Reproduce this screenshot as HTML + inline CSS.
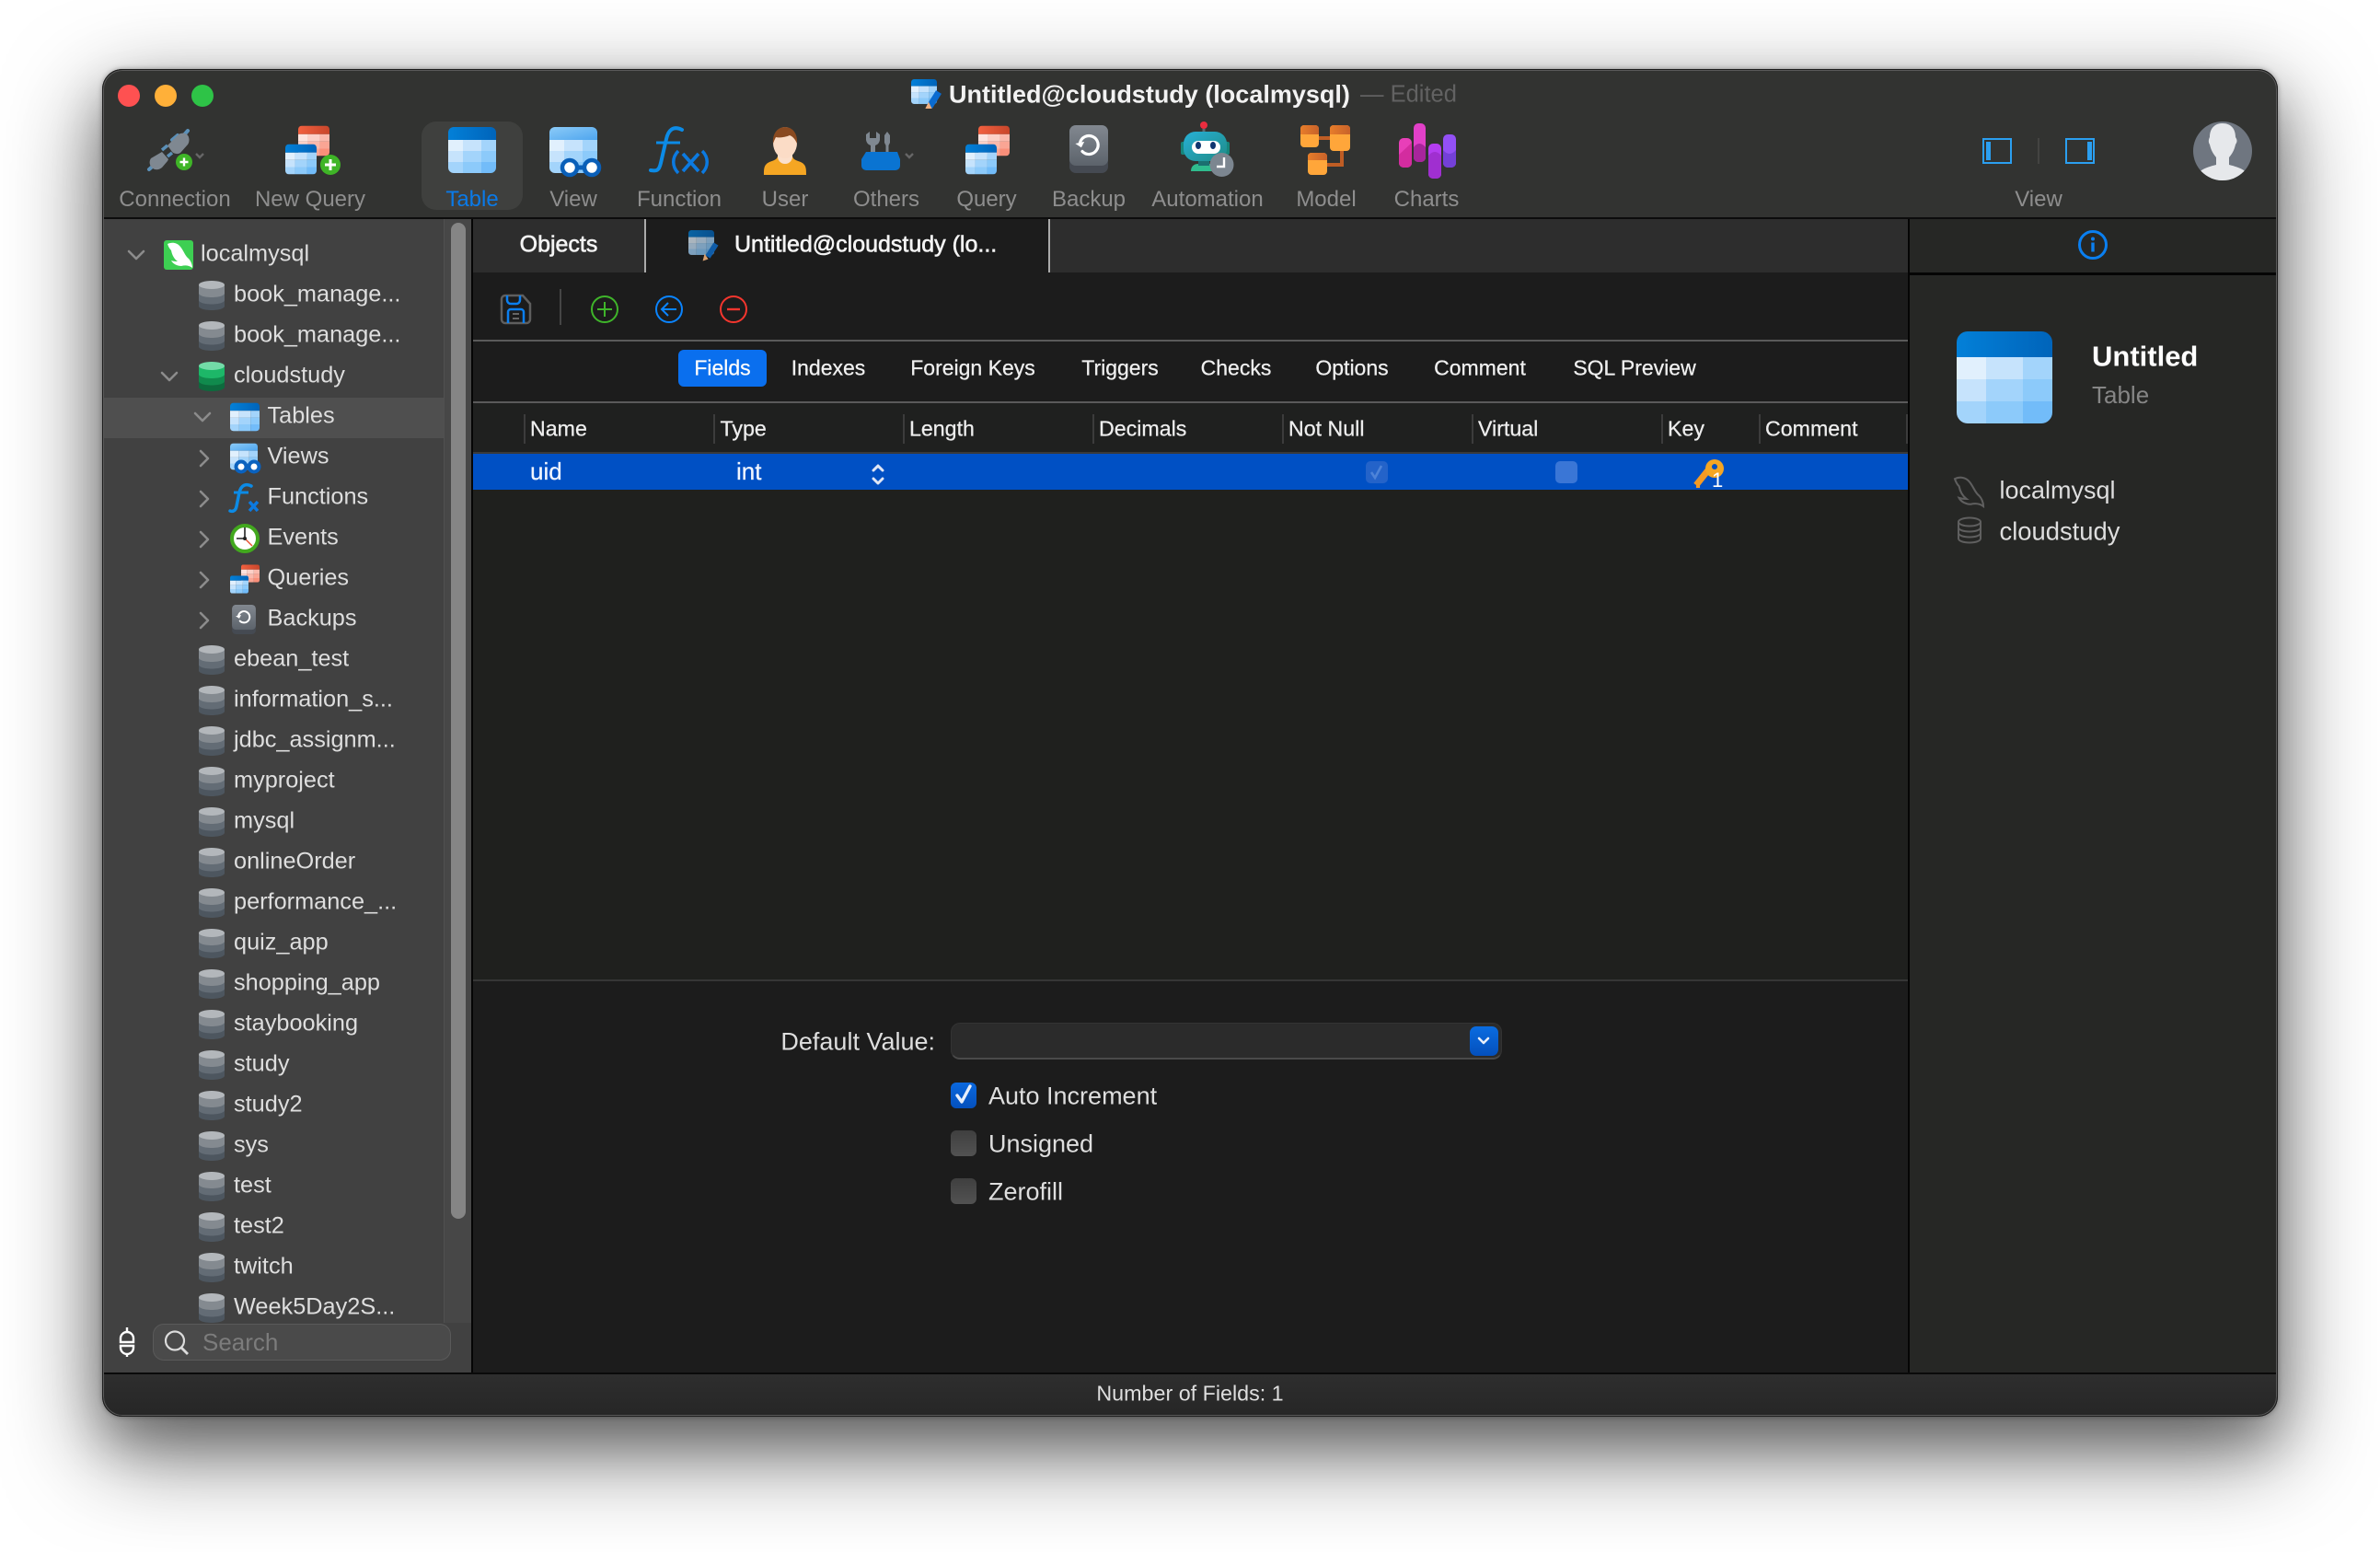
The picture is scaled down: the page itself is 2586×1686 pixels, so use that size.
<!DOCTYPE html>
<html><head><meta charset="utf-8"><title>Untitled@cloudstudy (localmysql)</title>
<style>
html,body{margin:0;padding:0;background:#fff;width:2586px;height:1686px;overflow:hidden}
body{font-family:"Liberation Sans",sans-serif;position:relative}
div{position:absolute}
.t{position:absolute;white-space:nowrap;line-height:1;transform:translateY(-50%)}
.c{transform:translate(-50%,-50%)}
.s{font-size:25.3px;color:#dedede}
.f{font-size:27px;color:#dedede}
.l{font-size:24px;color:#8e8e8e}
.h{font-size:23.2px;color:#eee;-webkit-text-stroke:.25px #eee}
.n{font-size:23px;color:#f0f0f0;-webkit-text-stroke:.25px #f0f0f0}
#shadow{left:111px;top:75px;width:2364px;height:1464px;border-radius:22px;box-shadow:0 36px 100px 4px rgba(0,0,0,.56),0 28px 50px rgba(0,0,0,.22),0 0 6px rgba(0,0,0,.35)}
#w{left:111px;top:75px;width:2364px;height:1464px;border-radius:22px;overflow:hidden;background:#2a2a2a}
#p{left:-111px;top:-75px;width:2586px;height:1686px}
#frame{left:111px;top:75px;width:2364px;height:1464px;border-radius:22px;box-sizing:border-box;border:1px solid #1d1d1d;box-shadow:inset 0 0 0 1px #5a5a5a}
</style></head><body>
<div id="shadow"></div>
<div id="w"><div id="p">
<div style="left:111px;top:75px;width:2364px;height:161px;background:#323331"></div>
<div style="left:111px;top:236px;width:2364px;height:2px;background:#0c0c0c"></div>
<div style="left:111px;top:238px;width:401px;height:1253px;background:#414141"></div>
<div style="left:111px;top:432px;width:371px;height:44px;background:#4f4f4f"></div>
<div style="left:482px;top:238px;width:30px;height:1199px;background:#474747;box-shadow:inset 1px 0 0 #505050"></div>
<div style="left:490px;top:242px;width:16px;height:1082px;border-radius:8px;background:#858585"></div>
<div style="left:512px;top:238px;width:2px;height:1253px;background:#050505"></div>
<div style="left:514px;top:238px;width:1559px;height:1253px;background:#1c1c1c"></div>
<div style="left:514px;top:238px;width:1559px;height:58px;background:#2d2d2d"></div>
<div style="left:701px;top:238px;width:439px;height:58px;background:#1c1c1c"></div>
<div style="left:700px;top:238px;width:2px;height:58px;background:#aaa"></div>
<div style="left:1139px;top:238px;width:2px;height:58px;background:#aaa"></div>
<div style="left:514px;top:369px;width:1559px;height:2px;background:#5a5a5a"></div>
<div style="left:514px;top:436px;width:1559px;height:2px;background:#5a5a5a"></div>
<div style="left:514px;top:438px;width:1559px;height:53px;background:#1f201f"></div>
<div style="left:514px;top:491px;width:1559px;height:2px;background:#3a3a3a"></div>
<div style="left:514px;top:493px;width:1559px;height:39px;background:#0050c4"></div>
<div style="left:514px;top:532px;width:1559px;height:532px;background:#1f201e"></div>
<div style="left:514px;top:1064px;width:1559px;height:2px;background:#363636"></div>
<div style="left:737px;top:380px;width:96px;height:40px;border-radius:6px;background:#0a6fee"></div>
<div style="left:569px;top:450px;width:2px;height:32px;background:#3c3c3c"></div>
<div style="left:775px;top:450px;width:2px;height:32px;background:#3c3c3c"></div>
<div style="left:981px;top:450px;width:2px;height:32px;background:#3c3c3c"></div>
<div style="left:1187px;top:450px;width:2px;height:32px;background:#3c3c3c"></div>
<div style="left:1393px;top:450px;width:2px;height:32px;background:#3c3c3c"></div>
<div style="left:1599px;top:450px;width:2px;height:32px;background:#3c3c3c"></div>
<div style="left:1805px;top:450px;width:2px;height:32px;background:#3c3c3c"></div>
<div style="left:1911px;top:450px;width:2px;height:32px;background:#3c3c3c"></div>
<div style="left:2071px;top:450px;width:2px;height:32px;background:#3c3c3c"></div>
<div style="left:2073px;top:238px;width:402px;height:1253px;background:#262725"></div>
<div style="left:2073px;top:238px;width:2px;height:1253px;background:#050505"></div>
<div style="left:2075px;top:296px;width:400px;height:3px;background:#050505"></div>
<div style="left:111px;top:1491px;width:2364px;height:2px;background:#0a0a0a"></div>
<div style="left:111px;top:1493px;width:2364px;height:46px;background:linear-gradient(#2e2e2e,#262626)"></div>
<div style="left:458px;top:132px;width:110px;height:96px;border-radius:16px;background:#3f403e"></div>
<div style="left:166px;top:1438px;width:324px;height:40px;box-sizing:border-box;border-radius:12px;background:#4a4a4a;border:1.5px solid #5a5a5a"></div>
<div style="left:1033px;top:1111px;width:599px;height:40px;box-sizing:border-box;border-radius:10px;background:#2b2b2b;border:1px solid #333;border-bottom:2px solid #4a4a4a"></div>
<div style="left:1597px;top:1115px;width:31px;height:32px;border-radius:7px;background:linear-gradient(#0a6ce0,#0450bd)"></div>
<div style="left:1033px;top:1176px;width:28px;height:28px;border-radius:6px;background:linear-gradient(#0a68de,#0450bd)"></div>
<div style="left:1033px;top:1228px;width:28px;height:28px;border-radius:6px;background:linear-gradient(#3f3f3f,#525252)"></div>
<div style="left:1033px;top:1280px;width:28px;height:28px;border-radius:6px;background:linear-gradient(#3f3f3f,#525252)"></div>
<div style="left:1484px;top:501px;width:24px;height:24px;border-radius:5px;background:#2463c9"></div>
<div style="left:1690px;top:501px;width:24px;height:24px;border-radius:5px;background:#3a76d6"></div>

<svg width="2586" height="1686" viewBox="0 0 2586 1686" style="position:absolute;left:0;top:0" fill="none">
<defs>
<linearGradient id="hb" x1="0" y1="0" x2="1" y2="0"><stop offset="0" stop-color="#0380d8"/><stop offset="1" stop-color="#0064ba"/></linearGradient>
<linearGradient id="hl" x1="0" y1="0" x2="1" y2="1"><stop offset="0" stop-color="#8ccbf8"/><stop offset="1" stop-color="#4ea5ee"/></linearGradient>
<linearGradient id="hr" x1="0" y1="0" x2="1" y2="0"><stop offset="0" stop-color="#f2603f"/><stop offset="1" stop-color="#c8462b"/></linearGradient>
<linearGradient id="bk" x1="0" y1="0" x2="0" y2="1"><stop offset="0" stop-color="#828890"/><stop offset="1" stop-color="#5c636b"/></linearGradient>
<linearGradient id="tl" x1="0" y1="0" x2="1" y2="1"><stop offset="0" stop-color="#27b0d6"/><stop offset="1" stop-color="#1f8b86"/></linearGradient>
<linearGradient id="or" x1="0" y1="0" x2="1" y2="0"><stop offset="0" stop-color="#e77d2a"/><stop offset="1" stop-color="#c8622a"/></linearGradient>
<clipPath id="cp"><rect width="104" height="100" rx="12"/></clipPath>
<symbol id="tb" viewBox="0 0 104 100"><g clip-path="url(#cp)">
<rect width="104" height="28" fill="url(#hb)"/>
<rect y="28" width="32" height="24" fill="#e1f0fd"/><rect x="32" y="28" width="40" height="24" fill="#c6e3fc"/><rect x="72" y="28" width="32" height="24" fill="#a3d4fb"/>
<rect y="52" width="32" height="24" fill="#c6e3fc"/><rect x="32" y="52" width="40" height="24" fill="#a3d4fb"/><rect x="72" y="52" width="32" height="24" fill="#8ccafa"/>
<rect y="76" width="32" height="24" fill="#a3d4fb"/><rect x="32" y="76" width="40" height="24" fill="#8ccafa"/><rect x="72" y="76" width="32" height="24" fill="#72bcf9"/></g></symbol>
<symbol id="tv" viewBox="0 0 104 100"><g clip-path="url(#cp)">
<rect width="104" height="28" fill="url(#hl)"/>
<rect y="28" width="32" height="24" fill="#e1f0fd"/><rect x="32" y="28" width="40" height="24" fill="#c6e3fc"/><rect x="72" y="28" width="32" height="24" fill="#a3d4fb"/>
<rect y="52" width="32" height="24" fill="#c6e3fc"/><rect x="32" y="52" width="40" height="24" fill="#a3d4fb"/><rect x="72" y="52" width="32" height="24" fill="#8ccafa"/>
<rect y="76" width="32" height="24" fill="#a3d4fb"/><rect x="32" y="76" width="40" height="24" fill="#8ccafa"/><rect x="72" y="76" width="32" height="24" fill="#72bcf9"/></g></symbol>
<symbol id="tr" viewBox="0 0 104 100"><g clip-path="url(#cp)">
<rect width="104" height="28" fill="url(#hr)"/>
<rect y="28" width="32" height="24" fill="#fde3de"/><rect x="32" y="28" width="40" height="24" fill="#fcd0c7"/><rect x="72" y="28" width="32" height="24" fill="#fbb9ac"/>
<rect y="52" width="32" height="24" fill="#fcd0c7"/><rect x="32" y="52" width="40" height="24" fill="#fbb9ac"/><rect x="72" y="52" width="32" height="24" fill="#faa594"/>
<rect y="76" width="32" height="24" fill="#fbb9ac"/><rect x="32" y="76" width="40" height="24" fill="#faa594"/><rect x="72" y="76" width="32" height="24" fill="#f98f7a"/></g></symbol>
<symbol id="db" viewBox="0 0 28 32">
<path d="M0 25v2.500C0 30 6 32 14 32s14-2 14-4.500V25z" fill="#4d565f"/><rect y="17" width="28" height="11" fill="#4d565f"/>
<path d="M0 13v8c0 2.500 6 4.500 14 4.500s14-2 14-4.500v-8z" fill="#636c75"/>
<path d="M0 4.500v9C0 16 6 18 14 18s14-2 14-4.500v-9z" fill="#848a90"/>
<ellipse cx="14" cy="4.500" rx="14" ry="4.500" fill="#b3b7bb"/></symbol>
<symbol id="dbg" viewBox="0 0 28 32">
<path d="M0 21v6.500C0 30 6 32 14 32s14-2 14-4.500V21z" fill="#0d6a3d"/>
<path d="M0 13v8c0 2.500 6 4.500 14 4.500s14-2 14-4.500v-8z" fill="#108a4d"/>
<path d="M0 4.500v9C0 16 6 18 14 18s14-2 14-4.500v-9z" fill="#1db768"/>
<ellipse cx="14" cy="4.500" rx="14" ry="4.500" fill="#73dba8"/></symbol>
<symbol id="chd" viewBox="0 0 20 12"><path d="M2 2l8 8 8-8" stroke="#8c8c8c" stroke-width="2.600" stroke-linecap="round" stroke-linejoin="round"/></symbol>
<symbol id="chr" viewBox="0 0 12 20"><path d="M2 2l8 8-8 8" stroke="#8c8c8c" stroke-width="2.600" stroke-linecap="round" stroke-linejoin="round"/></symbol>
<symbol id="bu" viewBox="0 0 42 52">
<rect width="42" height="52" rx="7" fill="#454a52"/><rect width="42" height="44" rx="7" fill="url(#bk)"/>
<path d="M11.500 19A10 10 0 1 1 14 28.500" stroke="#fff" stroke-width="3.200" stroke-linecap="round"/><path d="M6.500 19h10l-4.500 5.500z" fill="#fff" transform="rotate(-12 11 20)"/></symbol>
</defs>

<!-- traffic lights -->
<circle cx="140" cy="104" r="12" fill="#fe5151"/><circle cx="180" cy="104" r="12" fill="#ffb039"/><circle cx="220" cy="104" r="12" fill="#2ec347"/>

<!-- title icon -->
<use href="#tb" x="990" y="86" width="28" height="27"/>
<path d="M1020 100l-10 16" stroke="#0a6bd0" stroke-width="7"/><path d="M1009 113l-2 4 4 0z" fill="#f0b080" stroke="#f0b080" stroke-width="2"/>

<!-- connection -->
<path d="M162 184l8-7M193 147l-6 5M204 142l-7 8" stroke="#5b90b8" stroke-width="4" stroke-linecap="round"/>
<path d="M182 158l12-12c3-2 8-2 10 1s2 7 0 10l-8 9c-3 2-7 1-9-1z" fill="#7f8891"/>
<path d="M164 172l12-7 7 8-1 2-6 7c-4 3-8 3-11 0s-3-7-1-10z" fill="#7f8891"/>
<path d="M176 163l6-5M182 170l5-4" stroke="#5b90b8" stroke-width="3.500"/>
<circle cx="200" cy="176" r="9" fill="#3fb527"/><path d="M200 171.500v9M195.500 176h9" stroke="#fff" stroke-width="2.400"/>
<path d="M213 167l4 4 4-4" stroke="#666" stroke-width="2.400"/>

<!-- new query -->
<use href="#tr" x="324" y="136" width="34" height="34"/><use href="#tb" x="310" y="156" width="34" height="34"/>
<circle cx="359" cy="179" r="11" fill="#3fb527"/><path d="M359 173v12M353 179h12" stroke="#fff" stroke-width="3"/>

<!-- table -->
<use href="#tb" x="487" y="138" width="52" height="50"/>

<!-- view -->
<use href="#tv" x="597" y="138" width="52" height="50"/>
<path d="M628 182h6" stroke="#0a5fb8" stroke-width="5"/>
<ellipse cx="619" cy="182" rx="8" ry="8" fill="#fff" stroke="#0a5fb8" stroke-width="4.500"/>
<ellipse cx="643" cy="182" rx="8" ry="8" fill="#fff" stroke="#0a5fb8" stroke-width="4.500"/>

<!-- function -->
<path d="M741 141c-10-5-15 1-17 10l-6 26c-2 9-5 9-11 8" stroke="#0c8be6" stroke-width="4" stroke-linecap="round"/>
<path d="M713 155h26" stroke="#0c8be6" stroke-width="3"/>
<path d="M737 164c-7 7-7 17 0 24M763 164c7 7 7 17 0 24" stroke="#0c7ae0" stroke-width="3.500"/>
<path d="M742 167l17 19M759 167l-17 19" stroke="#0c7ae0" stroke-width="3.800"/>

<!-- user -->
<path d="M830 190c0-7 0-11 6-14 6-2 8-3 9-6h16c1 3 3 4 9 6 6 3 6 7 6 14z" fill="#f5a623"/>
<path d="M853 178c-5 0-8-4-8-8v-4h16v4c0 4-3 8-8 8z" fill="#fbe0cc"/>
<ellipse cx="853" cy="155" rx="13" ry="17" fill="#fbdcc6"/>
<path d="M840 156c-1-11 5-18 13-18s14 7 13 18c-2-5-5-8-8-9-4 2-12 3-15 2-1 2-2 4-3 7z" fill="#8a4a20"/>

<!-- others -->
<path d="M941 146v6a7.500 7.500 0 0 0 5 6v12h5v-12a7.500 7.500 0 0 0 5-6v-6l-4-3v7h-7v-7z" fill="#7f8891"/>
<path d="M964 143l3 4v8l-1.500 3v12h-3v-12l-1.500-3v-8z" fill="#7f8891"/>
<path d="M941 165h34l3 8v7a5 5 0 0 1-5 5h-32a5 5 0 0 1-5-5v-7z" fill="#0a74d2"/>
<path d="M984 167l4 4 4-4" stroke="#666" stroke-width="2.400"/>

<!-- query -->
<use href="#tr" x="1063" y="136" width="34" height="34"/><use href="#tb" x="1049" y="156" width="34" height="34"/>

<!-- backup -->
<use href="#bu" x="1162" y="136" width="42" height="52"/>

<!-- automation -->
<path d="M1308 140v6" stroke="#5c6a70" stroke-width="3"/><circle cx="1308" cy="136" r="4" fill="#ea2d3f"/>
<path d="M1294 186c0-5 3-8 8-8h22v8z" fill="#2fbc8e"/><rect x="1302" y="174" width="12" height="6" fill="#1b6f70"/>
<rect x="1283" y="154" width="5" height="14" rx="2" fill="#16867c"/><rect x="1331" y="154" width="5" height="14" rx="2" fill="#16867c"/>
<rect x="1286" y="143" width="47" height="32" rx="13" fill="url(#tl)"/>
<rect x="1295" y="153" width="31" height="14" rx="7" fill="#fff"/>
<ellipse cx="1302" cy="158" rx="3" ry="4" fill="#10356f"/><ellipse cx="1318" cy="158" rx="3" ry="4" fill="#10356f"/>
<ellipse cx="1327.500" cy="179" rx="13" ry="13" fill="#7c8690"/>
<path d="M1330 171v10h-8" stroke="#fff" stroke-width="2.400"/>

<!-- model -->
<path d="M1433 150h12M1458 164v15h-16" stroke="#bf5d24" stroke-width="4"/>
<rect x="1413" y="136" width="20" height="24" rx="4" fill="#ffa63a"/><path d="M1413 146v-6a4 4 0 0 1 4-4h12a4 4 0 0 1 4 4v6z" fill="url(#or)"/>
<rect x="1445" y="136" width="22" height="28" rx="4" fill="#ffa63a"/><path d="M1445 146v-6a4 4 0 0 1 4-4h14a4 4 0 0 1 4 4v6z" fill="url(#or)"/>
<rect x="1421" y="166" width="21" height="24" rx="4" fill="#ffa63a"/><path d="M1421 174v-4a4 4 0 0 1 4-4h13a4 4 0 0 1 4 4v4z" fill="url(#or)"/>

<!-- charts -->
<rect x="1520" y="150" width="14" height="32" rx="5" fill="#e83fb8"/><path d="M1520 177v-9l14-13v22a5 5 0 0 1-5 5h-4a5 5 0 0 1-5-5z" fill="#d02a9c" opacity=".9"/>
<rect x="1536" y="134" width="13" height="42" rx="5" fill="#e240c8"/><path d="M1536 171v-11q6-8 13 0v11a5 5 0 0 1-5 5h-3a5 5 0 0 1-5-5z" fill="#a8259c"/>
<rect x="1552" y="156" width="14" height="38" rx="5" fill="#b43df0"/><path d="M1552 189v-20q7-8 14 0v20a5 5 0 0 1-5 5h-4a5 5 0 0 1-5-5z" fill="#a02fd0"/>
<rect x="1568" y="146" width="14" height="36" rx="5" fill="#9350f5"/><path d="M1568 177v-14q7 8 14 0v14a5 5 0 0 1-5 5h-4a5 5 0 0 1-5-5z" fill="#7440d8"/>

<!-- view toggles -->
<rect x="2155" y="151" width="30" height="26" stroke="#2b9ff0" stroke-width="2"/><rect x="2158" y="154" width="5" height="20" fill="#2b9ff0"/>
<path d="M2215 150v28" stroke="#4a4b49" stroke-width="1.500"/>
<rect x="2245" y="151" width="30" height="26" stroke="#2b9ff0" stroke-width="2"/><rect x="2268" y="154" width="5" height="20" fill="#2b9ff0"/>

<!-- avatar -->
<circle cx="2415" cy="164" r="32" fill="#6f7680"/>
<clipPath id="av"><circle cx="2415" cy="164" r="32"/></clipPath>
<g clip-path="url(#av)"><path d="M2384 196c2-10 12-14 24-17v-8c-5-6-6-10-7-14-2-3-1-6 0-8 0-9 5-15 14-15s14 6 14 15c2 3 2 5 0 8-1 4-2 8-7 14v8c12 3 22 7 24 17z" fill="#e6e8eb"/></g>

<!-- tab icon -->
<use href="#tb" x="748" y="250" width="28" height="27" opacity=".72"/>
<path d="M778 265l-9 14" stroke="#0f5ca8" stroke-width="6"/><path d="M766 278l-1 4 3-1z" fill="#d8a070" stroke="#d8a070" stroke-width="2"/>

<!-- content toolbar -->
<path d="M549 321h19l8 9v17a4 4 0 0 1-4 4h-23a4 4 0 0 1-4-4v-22a4 4 0 0 1 4-4z" stroke="#5e5e5e" stroke-width="2.500"/>
<path d="M551 321v5a4 4 0 0 0 4 4h6a4 4 0 0 0 4-4v-5" stroke="#0a7ff0" stroke-width="2.500"/>
<path d="M552 351v-12a3 3 0 0 1 3-3h11a3 3 0 0 1 3 3v12" stroke="#0a7ff0" stroke-width="2.500"/>
<path d="M557 341h7M557 346h7" stroke="#666" stroke-width="2"/>
<path d="M609 314v39" stroke="#454545" stroke-width="2"/>
<circle cx="657" cy="336" r="14" stroke="#3fb52a" stroke-width="2"/><path d="M657 328v16M649 336h16" stroke="#3fb52a" stroke-width="2"/>
<circle cx="727" cy="336" r="14" stroke="#0a84ff" stroke-width="2"/><path d="M735 336h-15M726 329l-7 7 7 7" stroke="#0a84ff" stroke-width="2"/>
<circle cx="797" cy="336" r="14" stroke="#f5362e" stroke-width="2"/><path d="M790 336h14" stroke="#f5362e" stroke-width="2.400"/>

<!-- stepper, checks, key -->
<path d="M949 511l5-5 5 5M949 520l5 5 5-5" stroke="#dfe6f5" stroke-width="3" stroke-linecap="round" stroke-linejoin="round"/>
<path d="M1490 513l4 6 7-13" stroke="#4d83d8" stroke-width="2.600"/>
<path d="M1843 527l16-20" stroke="#f59a23" stroke-width="7"/><path d="M1843 523v7h4v-5z" fill="#f59a23"/>
<circle cx="1863" cy="509" r="10" fill="#f5a623"/><circle cx="1863" cy="507" r="3" fill="#0050c4"/>

<!-- form -->
<path d="M1607 1128l5 5 5-5" stroke="#e8effa" stroke-width="2.600" stroke-linecap="round" stroke-linejoin="round"/>
<path d="M1040 1190l5 7 9-17" stroke="#e6eefb" stroke-width="3.400" stroke-linecap="round" stroke-linejoin="round"/>

<!-- info -->
<circle cx="2274" cy="266" r="14.500" stroke="#0a7ff0" stroke-width="3"/><circle cx="2274" cy="259.500" r="2" fill="#0a7ff0"/><path d="M2274 263.500v10" stroke="#0a7ff0" stroke-width="3.400"/>
<use href="#tb" x="2126" y="360" width="104" height="100"/>
<path transform="translate(2124 519) scale(1.15) translate(-182 -264)" d="M182 265C186 263 192 263 196 268C200 273 201 278 205 281C207 283 209 287 209 291C205 288 201 288 197 289C193 289 188 287 186 283C189 284 191 284 193 284C189 281 187 277 186 272C184 270 183 268 182 265z" stroke="#5f5f5f" stroke-width="1.800"/>
<ellipse cx="2140" cy="567" rx="12" ry="4.500" stroke="#5f5f5f" stroke-width="2"/>
<path d="M2128 567v18c0 2.500 5 4.500 12 4.500s12-2 12-4.500v-18M2128 573c0 2.500 5 4.500 12 4.500s12-2 12-4.500M2128 579c0 2.500 5 4.500 12 4.500s12-2 12-4.500" stroke="#5f5f5f" stroke-width="2"/>

<!-- sidebar icons -->
<use href="#chd" x="138" y="271" width="20" height="12"/>
<rect x="178" y="261" width="32" height="32" rx="3" fill="#3dcf52"/>
<path d="M182 265C186 263 192 263 196 268C200 273 201 278 205 281C207 283 209 287 209 291C205 288 201 288 197 289C193 289 188 287 186 283C189 284 191 284 193 284C189 281 187 277 186 272C184 270 183 268 182 265z" fill="#fff"/>
<use href="#db" x="216" y="305" width="28" height="32"/>
<use href="#db" x="216" y="349" width="28" height="32"/>
<use href="#dbg" x="216" y="393" width="28" height="32"/>
<use href="#chd" x="174" y="403" width="20" height="12"/>
<use href="#chd" x="210" y="447" width="20" height="12"/>
<use href="#tb" x="250" y="437" width="32" height="32"/>
<use href="#chr" x="216" y="488" width="12" height="20"/>
<use href="#tv" x="250" y="481" width="30" height="30"/>
<circle cx="262" cy="507" r="5.500" fill="#fff" stroke="#0a62bf" stroke-width="4"/><circle cx="276" cy="507" r="5.500" fill="#fff" stroke="#0a62bf" stroke-width="4"/><path d="M267 507h4" stroke="#0a62bf" stroke-width="3"/>
<use href="#chr" x="216" y="532" width="12" height="20"/>
<path d="M273 528c-6-3-11-1-13 7l-3 15c-1 5-4 6-7 5" stroke="#0c8be6" stroke-width="3.500" stroke-linecap="round"/><path d="M254 535h16" stroke="#0c8be6" stroke-width="3"/>
<path d="M271 545l9 10M280 545l-9 10" stroke="#0c7ae0" stroke-width="3.500"/>
<use href="#chr" x="216" y="576" width="12" height="20"/>
<circle cx="266" cy="585" r="14" fill="#fff" stroke="#42a81e" stroke-width="4"/>
<path d="M266 573v12l-9 0" stroke="#222" stroke-width="1.600"/><path d="M266 585l8 8" stroke="#e8502f" stroke-width="1.400"/><circle cx="266" cy="585" r="2" fill="#222"/>
<use href="#chr" x="216" y="620" width="12" height="20"/>
<use href="#tr" x="262" y="613" width="20" height="20"/><use href="#tb" x="250" y="625" width="20" height="20"/>
<use href="#chr" x="216" y="664" width="12" height="20"/>
<use href="#bu" x="252" y="657" width="26" height="32"/>
<use href="#db" x="216" y="701" width="28" height="32"/>
<use href="#db" x="216" y="745" width="28" height="32"/>
<use href="#db" x="216" y="789" width="28" height="32"/>
<use href="#db" x="216" y="833" width="28" height="32"/>
<use href="#db" x="216" y="877" width="28" height="32"/>
<use href="#db" x="216" y="921" width="28" height="32"/>
<use href="#db" x="216" y="965" width="28" height="32"/>
<use href="#db" x="216" y="1009" width="28" height="32"/>
<use href="#db" x="216" y="1053" width="28" height="32"/>
<use href="#db" x="216" y="1097" width="28" height="32"/>
<use href="#db" x="216" y="1141" width="28" height="32"/>
<use href="#db" x="216" y="1185" width="28" height="32"/>
<use href="#db" x="216" y="1229" width="28" height="32"/>
<use href="#db" x="216" y="1273" width="28" height="32"/>
<use href="#db" x="216" y="1317" width="28" height="32"/>
<use href="#db" x="216" y="1361" width="28" height="32"/>
<use href="#db" x="216" y="1405" width="28" height="32"/>

<!-- plug + search -->
<path d="M138 1442v5M131 1458v-4a7 7 0 0 1 14 0v4zM131 1462v2a7 7 0 0 0 14 0v-2zM138 1471v3" stroke="#fff" stroke-width="2.400"/>
<circle cx="190" cy="1456.500" r="10" stroke="#dcdcdc" stroke-width="2.200"/><path d="M197 1464l7 7" stroke="#dcdcdc" stroke-width="2.800"/>
</svg>

<span class="t" style="left:1031px;top:102.500px;font-size:27px;font-weight:bold;color:#f2f2f2">Untitled@cloudstudy (localmysql)</span>
<span class="t" style="left:1478px;top:102.500px;font-size:25.500px;color:#626262">— Edited</span>

<span class="t c l" style="left:190px;top:217px">Connection</span>
<span class="t c l" style="left:337px;top:217px">New Query</span>
<span class="t c l" style="left:513px;top:217px;color:#0a7ae8">Table</span>
<span class="t c l" style="left:623px;top:217px">View</span>
<span class="t c l" style="left:738px;top:217px">Function</span>
<span class="t c l" style="left:853px;top:217px">User</span>
<span class="t c l" style="left:963px;top:217px">Others</span>
<span class="t c l" style="left:1072px;top:217px">Query</span>
<span class="t c l" style="left:1183px;top:217px">Backup</span>
<span class="t c l" style="left:1312px;top:217px">Automation</span>
<span class="t c l" style="left:1441px;top:217px">Model</span>
<span class="t c l" style="left:1550px;top:217px">Charts</span>
<span class="t c l" style="left:2215px;top:217px">View</span>

<span class="t c" style="left:607px;top:266px;font-size:25px;color:#f4f4f4;-webkit-text-stroke:.6px #f4f4f4">Objects</span>
<span class="t" style="left:798px;top:266px;font-size:25px;color:#f4f4f4;-webkit-text-stroke:.6px #f4f4f4">Untitled@cloudstudy (lo...</span>

<span class="t s" style="left:218px;top:276px">localmysql</span>
<span class="t s" style="left:254px;top:320px">book_manage...</span>
<span class="t s" style="left:254px;top:364px">book_manage...</span>
<span class="t s" style="left:254px;top:408px">cloudstudy</span>
<span class="t s" style="left:290.500px;top:452px">Tables</span>
<span class="t s" style="left:290.500px;top:496px">Views</span>
<span class="t s" style="left:290.500px;top:540px">Functions</span>
<span class="t s" style="left:290.500px;top:584px">Events</span>
<span class="t s" style="left:290.500px;top:628px">Queries</span>
<span class="t s" style="left:290.500px;top:672px">Backups</span>
<span class="t s" style="left:254px;top:716px">ebean_test</span>
<span class="t s" style="left:254px;top:760px">information_s...</span>
<span class="t s" style="left:254px;top:804px">jdbc_assignm...</span>
<span class="t s" style="left:254px;top:848px">myproject</span>
<span class="t s" style="left:254px;top:892px">mysql</span>
<span class="t s" style="left:254px;top:936px">onlineOrder</span>
<span class="t s" style="left:254px;top:980px">performance_...</span>
<span class="t s" style="left:254px;top:1024px">quiz_app</span>
<span class="t s" style="left:254px;top:1068px">shopping_app</span>
<span class="t s" style="left:254px;top:1112px">staybooking</span>
<span class="t s" style="left:254px;top:1156px">study</span>
<span class="t s" style="left:254px;top:1200px">study2</span>
<span class="t s" style="left:254px;top:1244px">sys</span>
<span class="t s" style="left:254px;top:1288px">test</span>
<span class="t s" style="left:254px;top:1332px">test2</span>
<span class="t s" style="left:254px;top:1376px">twitch</span>
<span class="t s" style="left:254px;top:1420px">Week5Day2S...</span>
<span class="t s" style="left:220px;top:1458px;font-size:26px;color:#7c7c7c">Search</span>

<span class="t c n" style="left:785px;top:400px;color:#fff">Fields</span>
<span class="t c n" style="left:900px;top:400px">Indexes</span>
<span class="t c n" style="left:1057px;top:400px">Foreign Keys</span>
<span class="t c n" style="left:1217px;top:400px">Triggers</span>
<span class="t c n" style="left:1343px;top:400px">Checks</span>
<span class="t c n" style="left:1469px;top:400px">Options</span>
<span class="t c n" style="left:1608px;top:400px">Comment</span>
<span class="t c n" style="left:1776px;top:400px">SQL Preview</span>

<span class="t h" style="left:576px;top:466px">Name</span>
<span class="t h" style="left:782.500px;top:466px">Type</span>
<span class="t h" style="left:988px;top:466px">Length</span>
<span class="t h" style="left:1194px;top:466px">Decimals</span>
<span class="t h" style="left:1400px;top:466px">Not Null</span>
<span class="t h" style="left:1606px;top:466px">Virtual</span>
<span class="t h" style="left:1812px;top:466px">Key</span>
<span class="t h" style="left:1918px;top:466px">Comment</span>

<span class="t" style="left:576px;top:512px;font-size:26px;color:#f0f5ff;-webkit-text-stroke:.25px #f0f5ff">uid</span>
<span class="t" style="left:800px;top:512px;font-size:26px;color:#f0f5ff;-webkit-text-stroke:.25px #f0f5ff">int</span>
<span class="t" style="left:1860px;top:522px;font-size:22px;color:#fff">1</span>

<span class="t f" style="right:1570px;top:1132px">Default Value:</span>
<span class="t f" style="left:1074px;top:1191px">Auto Increment</span>
<span class="t f" style="left:1074px;top:1243px">Unsigned</span>
<span class="t f" style="left:1074px;top:1295px">Zerofill</span>

<span class="t" style="left:2273px;top:387px;font-size:31px;font-weight:bold;color:#fff">Untitled</span>
<span class="t" style="left:2273px;top:429px;font-size:26px;color:#868686">Table</span>
<span class="t" style="left:2172.500px;top:533px;font-size:27px;color:#dedede">localmysql</span>
<span class="t" style="left:2172.500px;top:577px;font-size:27.400px;color:#dedede">cloudstudy</span>

<span class="t c" style="left:1293px;top:1514px;font-size:23.300px;color:#dedede">Number of Fields: 1</span>
</div></div>
<div id="frame"></div>
</body></html>
